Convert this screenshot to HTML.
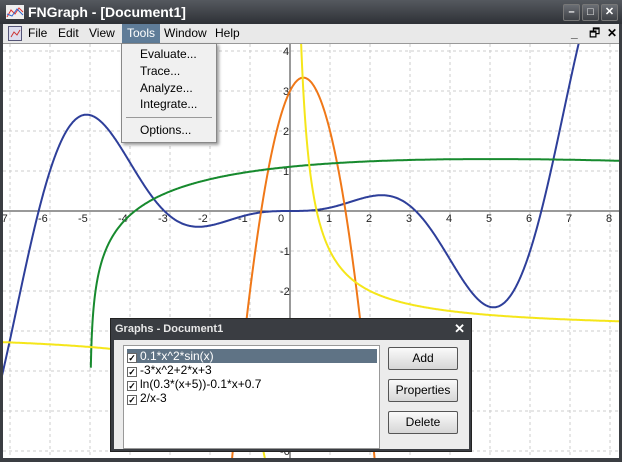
<!DOCTYPE html>
<html><head><style>
*{margin:0;padding:0;box-sizing:border-box}
html,body{overflow:hidden}
body{width:622px;height:462px;overflow:hidden;background:#3a3d42;font-family:"Liberation Sans",sans-serif;position:relative}
.title{position:absolute;left:0;top:0;width:622px;height:24px;background:linear-gradient(#55595f,#2e3136);color:#fff;font-weight:bold;font-size:14px;line-height:24px;padding-left:28px}
.menubar{position:absolute;left:3px;top:24px;width:616px;height:20px;background:#e9e9e9;border-bottom:1px solid #999;font-size:12px;line-height:19px;overflow:hidden}
.menubar span{position:absolute;top:0}
.plot{position:absolute;left:3px;top:44px;width:616px;height:414px;background:#fff;overflow:hidden}
.menu{position:absolute;left:121px;top:43px;width:96px;height:100px;background:#f0f0f0;border:1px solid #888;box-shadow:2px 2px 3px rgba(0,0,0,.4);font-size:12px}
.menu div{position:absolute;left:18px}
.tb{position:absolute;width:17px;height:17px;border:1px solid #777;border-radius:2px;background:linear-gradient(#6a6e74,#3d4045);color:#fff;font-size:11px;font-weight:bold;text-align:center;line-height:15px;top:4px}
.dlg{position:absolute;left:110px;top:318px;width:362px;height:134px;background:#3a3d42;border:1px solid #222;overflow:hidden}
.dlg .dt{color:#e8e8e8;font-weight:bold;font-size:11px;position:absolute;left:4px;top:4px}
.dlg .body{position:absolute;left:3px;top:21px;width:355px;height:109px;background:#ececec}
.list{position:absolute;left:9px;top:5px;width:257px;height:104px;background:#fff;border:1px solid #999;font-size:12px}
.item{position:absolute;left:3px;height:14px;line-height:14px;width:250px}
.cb{display:inline-block;width:10px;height:10px;border:1px solid #666;vertical-align:-1px;margin-right:3px;font-size:9px;line-height:8px;text-align:center;font-weight:bold}
.btn{position:absolute;left:274px;width:70px;height:23px;border:1px solid #555;border-radius:2px;background:linear-gradient(#fafafa,#d6d6d6);font-size:12px;text-align:center;line-height:21px}
</style></head><body>
<div class="title">FNGraph - [Document1]</div>
<svg style="position:absolute;left:6px;top:5px" width="18" height="14"><rect width="18" height="14" fill="#eee"/><path d="M1 12 L5 5 L9 9 L13 3 L17 7" stroke="#d33" fill="none"/><path d="M1 9 L6 11 L11 4 L17 10" stroke="#36c" fill="none"/></svg>
<div class="tb" style="left:563px">–</div><div class="tb" style="left:582px">□</div><div class="tb" style="left:601px">✕</div>
<div class="menubar">
<svg style="position:absolute;left:5px;top:2px" width="14" height="15"><rect x=".5" y=".5" width="13" height="14" fill="#dde" stroke="#557"/><path d="M3 11 L6 6 L9 9 L12 4" stroke="#c33" fill="none"/></svg>
<span style="left:25px">File</span><span style="left:55px">Edit</span><span style="left:86px">View</span>
<span style="left:119px;top:0;height:19px;background:#5f7c98;color:#fff;padding:0 5px">Tools</span>
<span style="left:161px">Window</span><span style="left:212px">Help</span>
<span style="left:568px;font-weight:bold">_</span><span style="left:586px">🗗</span><span style="left:604px;font-weight:bold">✕</span>
</div>
<div class="plot"><svg id="g" width="616" height="414"></svg></div>
<div class="menu">
<div style="top:3px">Evaluate...</div><div style="top:20px">Trace...</div><div style="top:37px">Analyze...</div><div style="top:53px">Integrate...</div>
<div style="left:4px;top:73px;width:86px;height:1px;background:#999"></div>
<div style="top:79px">Options...</div></div>
<div class="dlg"><div class="dt">Graphs - Document1</div><div style="position:absolute;right:6px;top:2px;color:#fff;font-weight:bold;font-size:13px">✕</div>
<div class="body"><div class="list">
<div class="item" style="top:3px;background:#5f7385;color:#fff"><span class="cb" style="background:#fff;color:#000">✓</span>0.1*x^2*sin(x)</div>
<div class="item" style="top:17px"><span class="cb">✓</span>-3*x^2+2*x+3</div>
<div class="item" style="top:31px"><span class="cb">✓</span>ln(0.3*(x+5))-0.1*x+0.7</div>
<div class="item" style="top:45px"><span class="cb">✓</span>2/x-3</div>
</div>
<div class="btn" style="top:7px">Add</div><div class="btn" style="top:39px">Properties</div><div class="btn" style="top:71px">Delete</div>
</div></div>
<script>
var s=document.getElementById('g'),h='';
var ox=287,oy=167,u=40;
for(var i=-8;i<=9;i++){var x=ox+i*u;h+='<line x1="'+x+'" y1="0" x2="'+x+'" y2="414" stroke="#ccc" stroke-dasharray="3,3"/>';}
for(var j=-7;j<=5;j++){var y=oy-j*u;h+='<line x1="0" y1="'+y+'" x2="616" y2="'+y+'" stroke="#ccc" stroke-dasharray="3,3"/>';}
h+='<line x1="0" y1="'+oy+'" x2="616" y2="'+oy+'" stroke="#333"/><line x1="'+ox+'" y1="0" x2="'+ox+'" y2="414" stroke="#333"/>';
for(var i=-7;i<=8;i++){var x=ox+i*u;h+='<text x="'+(x-(i<=0?12:4))+'" y="'+(oy+11)+'" font-size="11" font-family="Liberation Sans" fill="#222">'+i+'</text>';}
for(var j=-6;j<=4;j++){if(!j)continue;var y=oy-j*u;h+='<text x="'+(ox-(j<0?10:7))+'" y="'+(y+4)+'" font-size="11" font-family="Liberation Sans" fill="#222">'+j+'</text>';}
function p(f,a,b,c){var d='',st=false;for(var x=a;x<=b;x+=0.01){var v=f(x);if(!isFinite(v)||v>7||v<-8){st=false;continue;}d+=(st?'L':'M')+(ox+x*u).toFixed(1)+' '+(oy-v*u).toFixed(1);st=true;}h+='<path d="'+d+'" stroke="'+c+'" stroke-width="2" fill="none"/>';}
p(function(x){return 0.1*x*x*Math.sin(x)},-7.3,8,'#2e3f9a');
p(function(x){return -3*x*x+2*x+3},-3,3,'#f07818');
p(function(x){return x<=-4.99?NaN:Math.log(0.3*(x+5))-0.1*x+0.7},-4.99,8.5,'#178a2e');
p(function(x){return Math.abs(x)<0.005?NaN:2/x-3},-7.3,-0.005,'#f5e61a');
p(function(x){return 2/x-3},0.005,8.5,'#f5e61a');
s.innerHTML=h;
</script>
</body></html>
